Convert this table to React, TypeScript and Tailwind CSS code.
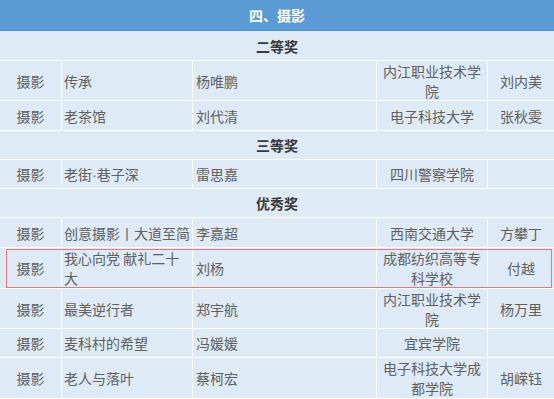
import React from "react";

type Row =
  | { kind: "section"; label: string; h: string }
  | { kind: "data"; cells: React.ReactNode[][]; h: string; highlight?: boolean };

const dot = <span className="font-['Liberation_Sans',sans-serif]">·</span>;

const rows: Row[] = [
  { kind: "section", label: "二等奖", h: "h-[30px]" },
  { kind: "data", cells: [["摄影"], ["传承"], ["杨唯鹏"], ["内江职业技术学", "院"], ["刘内美"]], h: "h-[40px]" },
  { kind: "data", cells: [["摄影"], ["老茶馆"], ["刘代清"], ["电子科技大学"], ["张秋雯"]], h: "h-[30px]" },
  { kind: "section", label: "三等奖", h: "h-[29px]" },
  { kind: "data", cells: [["摄影"], [<>老街{dot}巷子深</>], ["雷思嘉"], ["四川警察学院"], [""]], h: "h-[29px]" },
  { kind: "section", label: "优秀奖", h: "h-[29px]" },
  { kind: "data", cells: [["摄影"], ["创意摄影丨大道至简"], ["李嘉超"], ["西南交通大学"], ["方攀丁"]], h: "h-[30px]" },
  { kind: "data", cells: [["摄影"], ["我心向党 献礼二十", "大"], ["刘杨"], ["成都纺织高等专", "科学校"], ["付越"]], h: "h-[41px]", highlight: true },
  { kind: "data", cells: [["摄影"], ["最美逆行者"], ["郑宇航"], ["内江职业技术学", "院"], ["杨万里"]], h: "h-[40px]" },
  { kind: "data", cells: [["摄影"], ["麦科村的希望"], ["冯媛媛"], ["宜宾学院"], [""]], h: "h-[29px]" },
  { kind: "data", cells: [["摄影"], ["老人与落叶"], ["蔡柯宏"], ["电子科技大学成", "都学院"], ["胡嵘钰"]], h: "h-[41px]" },
];

const align = [
  "justify-center text-center border-r border-white",
  "justify-start text-left pl-[2px] border-r border-white",
  "justify-start text-left pl-[3px] border-r border-white",
  "justify-center text-center border-r border-white",
  "justify-center text-center",
];

export default function App() {
  return (
    <div className="w-[554px] h-[399px] overflow-hidden bg-[#deebf6] text-[14px] leading-[20px] text-[#606060] font-['Noto_Sans_CJK_SC','Noto_Sans',sans-serif]">
      <div className="h-[31px] bg-[#5b9bd5] border-b border-[#4f8fca] flex items-center justify-center text-white font-bold">
        四、摄影
      </div>
      {rows.map((r, i) =>
        r.kind === "section" ? (
          <div
            key={i}
            className={`${r.h} flex items-center justify-center font-bold text-[#3a3a3a] border-b border-white`}
          >
            {r.label}
          </div>
        ) : (
          <div
            key={i}
            className={`${r.h} relative grid grid-cols-[62px_131px_184px_111px_66px] border-b border-white`}
          >
            {r.cells.map((c, j) => (
              <div key={j} className={`flex items-center ${align[j]}`}>
                <div className="whitespace-nowrap">
                  {c.map((line, k) => (
                    <div key={k}>{line}</div>
                  ))}
                </div>
              </div>
            ))}
            {r.highlight && (
              <div className="absolute left-[6px] right-[2px] top-[1px] bottom-0 border border-[#e8767a] pointer-events-none" />
            )}
          </div>
        )
      )}
    </div>
  );
}
